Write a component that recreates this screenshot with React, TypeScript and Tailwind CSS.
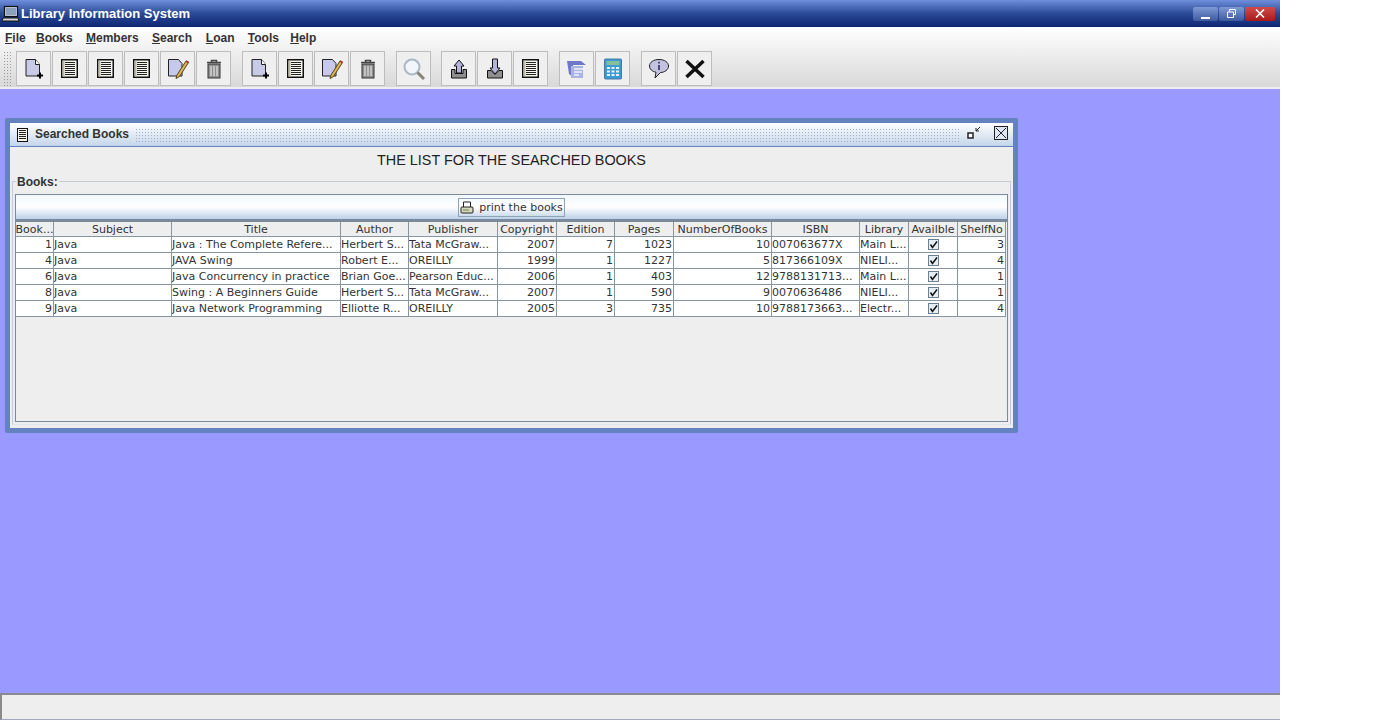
import React from 'react';

const columns = ['Book...', 'Subject', 'Title', 'Author', 'Publisher', 'Copyright', 'Edition', 'Pages', 'NumberOfBooks', 'ISBN', 'Library', 'Availble', 'ShelfNo'];

const books = [
  ['1', 'Java', 'Java : The Complete Refere...', 'Herbert S...', 'Tata McGraw...', '2007', '7', '1023', '10', '007063677X', 'Main L...', '3'],
  ['4', 'Java', 'JAVA Swing', 'Robert E...', 'OREILLY', '1999', '1', '1227', '5', '817366109X', 'NIELI...', '4'],
  ['6', 'Java', 'Java Concurrency in practice', 'Brian Goe...', 'Pearson Educ...', '2006', '1', '403', '12', '9788131713...', 'Main L...', '1'],
  ['8', 'Java', 'Swing : A Beginners Guide', 'Herbert S...', 'Tata McGraw...', '2007', '1', '590', '9', '0070636486', 'NIELI...', '1'],
  ['9', 'Java', 'Java Network Programming', 'Elliotte R...', 'OREILLY', '2005', '3', '735', '10', '9788173663...', 'Electr...', '4'],
];

const gridCols = 'grid grid-cols-[38px_118px_169px_68px_89px_59px_58px_59px_98px_88px_49px_49px_48px]';
const rightAligned = [0, 5, 6, 7, 8, 11];

function ListIcon({ small = false }: { small?: boolean }) {
  if (small) {
    return (
      <svg width="11" height="14" viewBox="0 0 11 14">
        <rect x="0.500" y="0.500" width="10" height="13" fill="#f4f4ec" stroke="#111" strokeWidth="1" />
        <path d="M2 2.500h7M2 4.500h7M2 6.500h7M2 8.500h7M2 10.500h7" stroke="#222" strokeWidth="1" />
      </svg>
    );
  }
  return (
    <svg width="17" height="19" viewBox="0 0 17 19">
      <rect x="0.750" y="0.750" width="15.500" height="17.500" fill="#f7f7ef" stroke="#111" strokeWidth="1.500" />
      <rect x="1.500" y="1.500" width="2" height="16" fill="#b9b9a6" />
      <path d="M4 3.500h10M4 5.500h10M4 7.500h10M4 9.500h10M4 11.500h10M4 13.500h10M4 15.500h10" stroke="#222" strokeWidth="1" />
    </svg>
  );
}

function NewIcon() {
  return (
    <svg width="20" height="22" viewBox="0 0 20 22">
      <path d="M2 1.500h9.500l4 5V18H2z" fill="#c9c9e8" stroke="#222" strokeWidth="1" />
      <path d="M11.500 1.500v5h4" fill="#fff" stroke="#222" strokeWidth="1" />
      <path d="M13 17.500h6M16 14.500v6" stroke="#000" strokeWidth="2" />
    </svg>
  );
}

function EditIcon() {
  return (
    <svg width="22" height="22" viewBox="0 0 22 22">
      <path d="M1.500 1.500h10l3.500 4V18H1.500z" fill="#c7c9ec" stroke="#222" strokeWidth="1" />
      <path d="M10 17l9-14 2.500 1.500-9 14-3.500 2z" fill="#d9b45a" stroke="#5a4412" strokeWidth="1" />
      <path d="M19 3l2.500 1.500" stroke="#a33" strokeWidth="2" />
    </svg>
  );
}

function TrashIcon() {
  return (
    <svg width="16" height="20" viewBox="0 0 16 20">
      <path d="M1 3.500h14M5.500 3.500V1.500h5v2" fill="none" stroke="#444" strokeWidth="1.500" />
      <rect x="2" y="5" width="12" height="14" fill="#8f8f8f" stroke="#333" strokeWidth="1" />
      <path d="M5 7v10M8 7v10M11 7v10" stroke="#e4e4e4" strokeWidth="1.200" />
    </svg>
  );
}

function SearchIcon() {
  return (
    <svg width="24" height="24" viewBox="0 0 24 24">
      <circle cx="10" cy="10" r="7.500" fill="#f2f6fb" stroke="#a9b7c4" strokeWidth="2" />
      <path d="M15.500 15.500L22 22" stroke="#85827a" strokeWidth="3" />
    </svg>
  );
}

function UpIcon() {
  return (
    <svg width="16" height="20" viewBox="0 0 16 20">
      <path d="M.5 10.500h3.500v4h8v-4h3.500V19H.5z" fill="#8f8f8f" stroke="#111" strokeWidth="1" />
      <path d="M8 1l5 6h-2.500v7h-5V7H3z" fill="#b5b5dc" stroke="#111" strokeWidth="1" />
    </svg>
  );
}

function DownIcon() {
  return (
    <svg width="16" height="21" viewBox="0 0 16 21">
      <path d="M.5 12.500h3.500l4 4 4-4h3.500V20H.5z" fill="#8f8f8f" stroke="#111" strokeWidth="1" />
      <path d="M8 16l-5-6h2.500V1h5v9H13z" fill="#b5b5dc" stroke="#111" strokeWidth="1" />
    </svg>
  );
}

function FolderIcon() {
  return (
    <svg width="22" height="20" viewBox="0 0 22 20">
      <path d="M1 2h14l5 4H7v12L3 15z" fill="#6f78c8" />
      <rect x="5" y="7" width="12" height="12" fill="#a9b4e4" />
      <path d="M8 10h11M8 13h8M8 16h5" stroke="#eef1fb" strokeWidth="1.500" />
    </svg>
  );
}

function CalcIcon() {
  return (
    <svg width="20" height="22" viewBox="0 0 20 22">
      <rect x="1.500" y="1" width="17" height="20" rx="1" fill="#3d9bd4" stroke="#4878a8" strokeWidth="1" />
      <rect x="3.500" y="3" width="13" height="4" fill="#86bf9b" />
      <path d="M4 10h3M8.500 10h3M13 10h3M4 13.500h3M8.500 13.500h3M13 13.500h3M4 17h3M8.500 17h3M13 17h3" stroke="#e8f4fb" strokeWidth="2" />
    </svg>
  );
}

function InfoIcon() {
  return (
    <svg width="22" height="22" viewBox="0 0 22 22">
      <path d="M11 1.500c5.500 0 9.500 2.800 9.500 6.500s-4 6.500-8 6.500L7 20l1-5.800C4 13.500 1.500 11 1.500 8c0-3.700 4-6.500 9.500-6.500z" fill="#c3c3df" stroke="#222" strokeWidth="1" />
      <path d="M11 3.800v1.800M11 7v5" stroke="#4a4a82" strokeWidth="2" />
    </svg>
  );
}

function CloseIcon() {
  return (
    <svg width="24" height="22" viewBox="0 0 24 22">
      <path d="M3.500 3L20.500 19M20.500 3L3.500 19" stroke="#111" strokeWidth="3.500" />
    </svg>
  );
}

function ToolButton({ children }: { children: React.ReactNode }) {
  return (
    <div className="w-[35px] h-[35px] mr-px flex items-center justify-center border border-[#bdbdbd] bg-[#efefef] shrink-0">
      {children}
    </div>
  );
}

function Mnemonic({ label }: { label: string }) {
  return (
    <span>
      <span className="underline">{label[0]}</span>
      {label.slice(1)}
    </span>
  );
}

function Checkbox() {
  return (
    <div className="w-[11px] h-[11px] border border-[#6a7f92] bg-[#e6eef5] flex items-center justify-center">
      <svg width="9" height="9" viewBox="0 0 9 9">
        <path d="M1.500 4.500L3.500 7.500L8 1.500" fill="none" stroke="#111" strokeWidth="1.500" />
      </svg>
    </div>
  );
}

export default function App() {
  return (
    <div className="w-[1280px] h-[720px] flex flex-col font-['DejaVu_Sans',sans-serif] overflow-hidden">
      {/* title bar */}
      <div className="h-[27px] shrink-0 flex items-center justify-between pl-[2px] pr-[5px] bg-gradient-to-b from-[#6f8fdc] via-[#2c4a96] to-[#0d2674]">
        <div className="flex items-center gap-px">
          <svg width="18" height="18" viewBox="0 0 18 18">
            <rect x="2.500" y="1.500" width="13" height="10" fill="#c9d3e6" stroke="#111" strokeWidth="1.200" />
            <rect x="4" y="3" width="10" height="7" fill="#8fa0bd" />
            <path d="M1 13h15l1 3H0z" fill="#d8d8d8" stroke="#111" strokeWidth="1" />
          </svg>
          <span className="font-['Liberation_Sans',sans-serif] font-bold text-[13px] leading-none text-white">Library Information System</span>
        </div>
        <div className="flex items-center gap-px">
          <div className="w-[25px] h-[14px] rounded-[2px] bg-gradient-to-b from-[#7f9ad6] to-[#3e5a9e] flex items-end justify-center pb-[2px]">
            <div className="w-[9px] h-[2px] bg-white"></div>
          </div>
          <div className="w-[25px] h-[14px] rounded-[2px] bg-gradient-to-b from-[#7f9ad6] to-[#3e5a9e] flex items-center justify-center">
            <svg width="9" height="9" viewBox="0 0 9 9">
              <path d="M2.500 2.500V.5h6v5h-2M.5 3h6v5.500h-6z" fill="none" stroke="#fff" strokeWidth="1" />
            </svg>
          </div>
          <div className="w-[30px] h-[14px] rounded-[2px] bg-gradient-to-b from-[#d14a4a] to-[#a81818] flex items-center justify-center">
            <svg width="10" height="9" viewBox="0 0 10 9">
              <path d="M1 .5L9 8.500M9 .5L1 8.500" stroke="#fff" strokeWidth="1.600" />
            </svg>
          </div>
        </div>
      </div>

      {/* menu and toolbar */}
      <div className="h-[62px] shrink-0 bg-gradient-to-b from-white to-[#d8d8d8] border-b-2 border-[#eeeeee]">
        <div className="h-[22px] flex items-center pl-[5px] gap-[13.300px] font-['Liberation_Sans',sans-serif] font-bold text-[12px] leading-none text-[#333333]">
          <span className="mr-[-3px]"><Mnemonic label="File" /></span>
          <Mnemonic label="Books" />
          <Mnemonic label="Members" />
          <span className="mr-[0.500px]"><Mnemonic label="Search" /></span>
          <Mnemonic label="Loan" />
          <Mnemonic label="Tools" />
          <span className="ml-[-2px]"><Mnemonic label="Help" /></span>
        </div>
        <div className="h-[35px] mt-[2px] flex items-center pl-[3px]">
          <div className="w-[9px] h-[35px] mr-[4px] bg-[radial-gradient(#9a9a9a_1px,transparent_1px)] bg-[length:3px_3px]"></div>
          <ToolButton><NewIcon /></ToolButton>
          <ToolButton><ListIcon /></ToolButton>
          <ToolButton><ListIcon /></ToolButton>
          <ToolButton><ListIcon /></ToolButton>
          <ToolButton><EditIcon /></ToolButton>
          <ToolButton><TrashIcon /></ToolButton>
          <div className="w-[10px] shrink-0"></div>
          <ToolButton><NewIcon /></ToolButton>
          <ToolButton><ListIcon /></ToolButton>
          <ToolButton><EditIcon /></ToolButton>
          <ToolButton><TrashIcon /></ToolButton>
          <div className="w-[10px] shrink-0"></div>
          <ToolButton><SearchIcon /></ToolButton>
          <div className="w-[9px] shrink-0"></div>
          <ToolButton><UpIcon /></ToolButton>
          <ToolButton><DownIcon /></ToolButton>
          <ToolButton><ListIcon /></ToolButton>
          <div className="w-[10px] shrink-0"></div>
          <ToolButton><FolderIcon /></ToolButton>
          <ToolButton><CalcIcon /></ToolButton>
          <div className="w-[10px] shrink-0"></div>
          <ToolButton><InfoIcon /></ToolButton>
          <ToolButton><CloseIcon /></ToolButton>
        </div>
      </div>

      {/* desktop */}
      <div className="flex-1 bg-[#9999ff] pt-[29px] pl-[5px]">
        <div className="w-[1013px] h-[315px] border-[5px] border-[#6382bf] rounded-[2px] bg-[#eeeeee] flex flex-col">
          <div className="h-[24px] shrink-0 flex items-center pl-[7px] pr-[5px] bg-gradient-to-b from-white to-[#c4d5ea] border-b border-[#6382bf]">
            <ListIcon small />
            <span className="ml-[7px] mr-[6px] pb-px font-['Liberation_Sans',sans-serif] font-bold text-[12px] leading-none text-[#333333]">Searched Books</span>
            <div className="flex-1 h-[14px] bg-[radial-gradient(#9fb0c6_0.7px,transparent_0.9px)] bg-[length:3px_3px]"></div>
            <div className="w-[16px] h-[16px] mb-[3px] ml-[5px] mr-[12px] flex items-center justify-end">
              <svg width="16" height="16" viewBox="0 0 16 16">
                <rect x="2" y="8" width="5" height="5" fill="#fff" stroke="#222" strokeWidth="1.500" />
                <path d="M14 2L10 6M10 3v3h3" fill="none" stroke="#222" strokeWidth="1" />
              </svg>
            </div>
            <div className="w-[14px] h-[14px] mb-[3px] border border-[#222] flex items-center justify-center bg-[#dde6f2]">
              <svg width="12" height="12" viewBox="0 0 12 12">
                <path d="M1 1L11 11M11 1L1 11" stroke="#222" strokeWidth="1" />
              </svg>
            </div>
          </div>

          <div className="h-[26px] shrink-0 flex items-center justify-center font-['Liberation_Sans',sans-serif] text-[14.400px] leading-none text-[#222222]">
            THE LIST FOR THE SEARCHED BOOKS
          </div>

          <div className="flex-1 mx-[2px] mb-[3px] relative border border-[#c4ccd6] border-b-[#dfe6ee] mt-[8px] px-[2px] pt-[12px] pb-[2px] flex flex-col">
            <span className="absolute left-[3px] top-[-7px] bg-[#eeeeee] px-[1px] font-['Liberation_Sans',sans-serif] font-bold text-[12px] leading-[14px] text-[#333333]">Books:</span>

            <div className="h-[26px] shrink-0 border border-[#7a8a9a] bg-gradient-to-b from-[#f2f8fd] via-white to-[#bcd1e8] flex items-center justify-center">
              <div className="h-[19px] pl-[1px] pr-px border border-[#8fa3b8] flex items-center gap-[5px] text-[11px] leading-none text-[#333333]">
                <svg width="14" height="13" viewBox="0 0 14 13">
                  <path d="M3.500 6V1h7v5" fill="#fff" stroke="#222" strokeWidth="1" />
                  <rect x="1" y="6" width="12" height="6" rx="1" fill="#d8d8c0" stroke="#222" strokeWidth="1" />
                  <path d="M3 9h6" stroke="#6a8a3a" strokeWidth="1" />
                </svg>
                <span>print the books</span>
              </div>
            </div>

            <div className="flex-1 border border-[#7a8a9a] border-t-0 bg-[#eeeeee] text-[11px] leading-none text-[#333333]">
              <div className={`${gridCols} h-[17px] bg-[#eeeeee] border-t-2 border-[#7a8a9a]`}>
                {columns.map((column) => (
                  <div key={column} className="flex items-center justify-center border-r border-b border-[#8796a5] overflow-hidden whitespace-nowrap h-[15px]">
                    {column}
                  </div>
                ))}
              </div>
              {books.map((book) => (
                <div key={book[0]} className={`${gridCols} h-[16px]`}>
                  {book.slice(0, 11).map((value, i) => (
                    <div
                      key={i}
                      className={`h-[16px] bg-white border-r border-b border-[#8796a5] flex items-center overflow-hidden whitespace-nowrap pr-px ${rightAligned.includes(i) ? 'justify-end' : 'justify-start'}`}
                    >
                      {value}
                    </div>
                  ))}
                  <div className="h-[16px] bg-white border-r border-b border-[#8796a5] flex items-center justify-center">
                    <Checkbox />
                  </div>
                  <div className="h-[16px] bg-white border-r border-b border-[#8796a5] flex items-center justify-end pr-px">
                    {book[11]}
                  </div>
                </div>
              ))}
            </div>
          </div>
        </div>
      </div>

      {/* status bar */}
      <div className="h-[27px] shrink-0 bg-[#eeeeee] border-t-2 border-l-2 border-[#8a8a8a] border-b border-b-[#a0a8c0]"></div>
    </div>
  );
}
